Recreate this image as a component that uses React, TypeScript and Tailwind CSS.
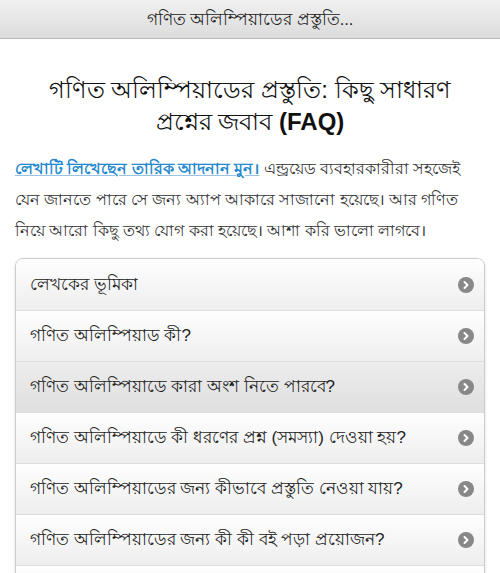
import { ChevronRight } from "lucide-react"

const items = [
  "লেখকের ভূমিকা",
  "গণিত অলিম্পিয়াড কী?",
  "গণিত অলিম্পিয়াডে কারা অংশ নিতে পারবে?",
  "গণিত অলিম্পিয়াডে কী ধরণের প্রশ্ন (সমস্যা) দেওয়া হয়?",
  "গণিত অলিম্পিয়াডের জন্য কীভাবে প্রস্তুতি নেওয়া যায়?",
  "গণিত অলিম্পিয়াডের জন্য কী কী বই পড়া প্রয়োজন?",
  "গণিত অলিম্পিয়াডে ভালো করতে হলে কী করতে হবে?",
]

export default function App() {
  return (
    <div className="h-[573px] overflow-hidden bg-white font-['Liberation_Sans','Noto_Sans',sans-serif] text-[#333]">
      <header className="flex h-[39px] items-center justify-center border-b border-[#bbb] bg-[linear-gradient(180deg,#f0f0f0,#dcdcdc)] px-12">
        <h1 className="truncate text-[16.5px] text-[#222]">গণিত অলিম্পিয়াডের প্রস্তুতি...</h1>
      </header>

      <main className="px-[15px] pt-[35px]">
        <h2 className="px-[10px] text-center text-[24px] leading-[32px] font-medium text-[#111]">
          গণিত অলিম্পিয়াডের প্রস্তুতি: কিছু সাধারণ প্রশ্নের জবাব <span className="font-bold">(FAQ)</span>
        </h2>

        <p className="mt-[15px] text-[15.6px] leading-[31px] text-[#333]">
          <a href="#" className="font-semibold text-[#2489ce] underline decoration-[#9cc3e4]">
            লেখাটি লিখেছেন তারিক আদনান মুন।
          </a>{" "}
          এন্ড্রয়েড ব্যবহারকারীরা সহজেই যেন জানতে পারে সে জন্য অ্যাপ আকারে সাজানো হয়েছে। আর গণিত নিয়ে আরো কিছু তথ্য যোগ করা হয়েছে। আশা করি ভালো লাগবে।
        </p>

        <ul className="mt-[12px] overflow-hidden rounded-t-[8px] border border-[#ccc] shadow-[0_1px_3px_rgba(0,0,0,0.15)]">
          {items.map((item, i) => (
            <li
              key={item}
              className={
                "flex h-[51px] items-center justify-between border-t border-[#ddd] pr-[10px] pl-[14px] first:border-t-0 " +
                (i === 2
                  ? "bg-[linear-gradient(180deg,#ededed,#dfdfdf)]"
                  : "bg-[linear-gradient(180deg,#fefefe,#eeeeee)]")
              }
            >
              <span className="truncate text-[17px] text-[#222]">{item}</span>
              <span className="flex size-[16px] shrink-0 items-center justify-center rounded-full bg-[#888]">
                <ChevronRight className="size-[12px] text-white" strokeWidth={4} />
              </span>
            </li>
          ))}
        </ul>
      </main>
    </div>
  )
}
